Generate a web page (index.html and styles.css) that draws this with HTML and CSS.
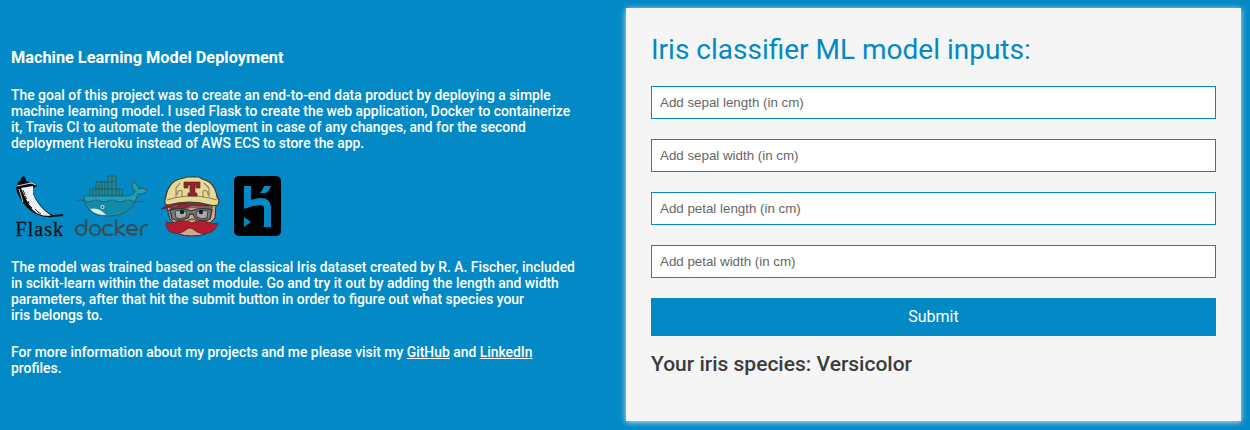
FILE: index.html
```
<!DOCTYPE html>
<html lang="en">
<head>
<meta charset="utf-8">
<title>Iris classifier</title>
<link rel="stylesheet" href="styles.css">
</head>
<body>
<main class="page">
  <section class="about">
    <h1 class="about-title">Machine Learning Model Deployment</h1>
    <p class="text">The goal of this project was to create an end-to-end data product by deploying a simple<br>machine learning model. I used Flask to create the web application, Docker to containerize<br>it, Travis CI to automate the deployment in case of any changes, and for the second<br>deployment Heroku instead of AWS ECS to store the app.</p>
    <div class="logos">
      <svg class="logo-flask" viewBox="0 0 54 60" width="54" height="60">
        <path d="M6 10 L7 6 L10 4 L10 2 L13 0 L15 3 L15 5 L18 6 L19 8 L25 8 L26 10 L22 12 L22 17 Q26 27 33 33 Q38 38 42 39 L52 38 V40 L42 41 Q29 42 20 35 Q10 27 6 16 L5 12Z" fill="#080a0c"/>
        <path d="M10 12 L22 10 L22 18 Q26 28 34 35 L40 39.500 Q29 41 22 34 Q17 29 10 12Z" fill="#eef1f2"/>
        <path d="M6 10 L20 7 L25 9 M8 13 L12 26" fill="none" stroke="#dfe5e8" stroke-width=".9"/>
        <path d="M14 20 l2 3 M17 25 l1 3 M24 33 l3 3 M17 28 l4 4 M12 14 l2 5 M27 36 l3 2" stroke="#222" stroke-width="1"/>
        <text x="4.500" y="60" class="flask-word" textLength="47.500" lengthAdjust="spacing">Flask</text>
      </svg>
      <svg class="logo-docker" viewBox="0 0 74 61" width="74" height="61">
        <path d="M15 20V13h6V6h12V0h8v13h6v7Z" fill="#188c9d" stroke="#2f5864"/>
        <path d="M21 13h20M27 6v14M33 6v14M21 13v7M33 6h8M41 13v7M18 14v6M24 8v12M30 7v13M37 1v19M44 14v6" stroke="#2f5864"/>
        <path d="M9 20H50Q59 20 60 15Q55 11 58 6Q63 8 64 13Q68 11 72 14Q70 19 63 18Q57 40 33 40Q11 41 9 20Z" fill="#16a3bd" stroke="#35606c" stroke-width="1.2"/>
        <path d="M10 25H60Q53 38 33 39Q15 38 10 25Z" fill="#128ba8"/>
        <path d="M15 33Q24 31 31 39Q20 39 15 33Z" fill="#dce8e7"/>
        <path d="M2 25q4-2 7 0q4 2 8 0q4-2 8 0q4 2 8 0q4-2 8 0q4 2 8 0q4-2 8 0q4 2 12 0" fill="none" stroke="#35606c" stroke-width="1.200"/>
        <circle cx="27.500" cy="31" r="2" fill="#d5e1e1"/><circle cx="27.500" cy="31" r="1" fill="#27464e"/>
        <g class="docker-word"><circle cx="6" cy="54" r="5"/><path d="M11 44v10"/><circle cx="20" cy="54" r="5"/><path d="M37 49.500q-9-2-9 4.500q0 6.500 9 4.500M41 44v15M49 49l-8 5 8 5M52 54h10q-1-5-5-5-5 0-5 5 1 6 9 4M66 59v-5q0-5 6-5"/></g>
      </svg>
      <svg class="logo-travis" viewBox="0 0 58 60" width="58" height="60">
        <path d="M8 27 L4 32 L7 43 L12 48 L15 58 Q28 62 43 58 L47 47 L52 42 L53 29Z" fill="#d4a78b" stroke="#342b2b"/>
        <path d="M6 27 L52 26 L49 34 L31 32 L10 34Z" fill="#71695f"/>
        <path d="M-2 33 Q10 24 25 27 L12 29 L5 35 L17 29 L37 26 L46 30 L29 29 L7 38 L9 31Z" fill="#a12430" stroke="#602029" stroke-width=".8"/>
        <path d="M3 20Q6 4 21 2l3-1h12l3 2q13 3 15 18l2 3-1 5q-5 1-8 0-20-6-42 0-4 0-3-5Z" fill="#e9d996" stroke="#3d3932" stroke-width="1.200"/>
        <path d="M4 24q24-8 50 0M13 21V12l4-5M46 21V12l-5-5M19 21v-6q-5-2-5 4M40 21v-6q5-2 5 4" fill="none" stroke="#8e825d" stroke-width="1.100"/>
        <path d="M22 6h15v6h-4v-3h-1v8h2v3h-9v-3h2V9h-2v3h-4V6Z" fill="#99202c" stroke="#493331" stroke-width=".7"/>
        <path d="M7 34q12-3 21 1 10-4 21-1l-2 9q-9 4-15-1l-2-4h-3l-2 4q-8 4-16 1Z" fill="#77797a" stroke="#35383b" stroke-width="1.300"/>
        <path d="M12 35q7-2 12 1l-1 5q-6 3-10 1ZM33 36q6-3 12-1l-1 7q-6 2-10-1Z" fill="#acaba3" stroke="#3a3d40"/>
        <circle cx="19" cy="36" r="2.200" fill="#171d20"/><circle cx="38" cy="36" r="2.200" fill="#171d20"/>
        <path d="M24 45q5-4 10 0" fill="#c3967e" stroke="#513b36"/>
        <path d="M3 46q5 2 9 0 10-3 17 1 8-4 16-1 5 3 10 1-3 9-10 10-9 2-15-4-4-2-6 0-7 6-13 4-8-1-8-11Z" fill="#b41d2d" stroke="#62222b" stroke-width=".8"/>
      </svg>
      <svg class="logo-heroku" viewBox="0 0 47 60" width="47" height="60">
        <rect width="47" height="60" rx="5"/>
        <path d="M10 10h7v14Q36 18 37 31v20h-7V32q0-6-20 1ZM30 10h7q-1 4-5 7h-6q3-3 4-7ZM10 41l7 5-7 5Z" fill="#0389c5"/>
      </svg>
    </div>
    <p class="text">The model was trained based on the classical Iris dataset created by R. A. Fischer, included<br>in scikit-learn within the dataset module. Go and try it out by adding the length and width<br>parameters, after that hit the submit button in order to figure out what species your<br>iris belongs to.</p>
    <p class="text contact">For more information about my projects and me please visit my <a href="#">GitHub</a> and <a href="#">LinkedIn</a><br>profiles.</p>
  </section>
  <form class="card">
    <h2 class="card-title">Iris classifier ML model inputs:</h2>
    <input class="field" placeholder="Add sepal length (in cm)">
    <input class="field" placeholder="Add sepal width (in cm)">
    <input class="field" placeholder="Add petal length (in cm)">
    <input class="field" placeholder="Add petal width (in cm)">
    <button class="submit" type="button">Submit</button>
    <p class="result">Your iris species: Versicolor</p>
  </form>
</main>
</body>
</html>
```
FILE: styles.css
```
* { box-sizing: border-box; }
body {
  margin: 0;
  background: #0389c5;
  color: #fff;
  font-family: Roboto, sans-serif;
  overflow: hidden;
}
.page {
  display: grid;
  grid-template-columns: 615px 615px;
  height: 430px;
  padding: 8px 0 9px 11px;
}
.about { padding-top: 40px; }
.about-title {
  margin: 0 0 19px;
  font-size: 16.3px;
  font-weight: 700;
  line-height: 20px;
}
.text {
  margin: 0;
  font-size: 13.9px;
  font-weight: 500;
  line-height: 16px;
  white-space: nowrap;
}
.text a { color: inherit; }
.contact { margin-top: 21px; }
.logos {
  display: flex;
  height: 60px;
  margin: 25px 0 23px;
}
.logos svg { overflow: visible; flex: none; }
.logo-docker { margin-left: 10px; }
.logo-travis { margin-left: 14px; }
.logo-heroku { margin-left: 13px; }
.flask-word { font: 20px "Liberation Serif", serif; fill: #111; stroke: #111; stroke-width: .3; }
.docker-word { fill: none; stroke: #394d54; stroke-width: 2.2; stroke-linecap: round; }
.card {
  display: flex;
  flex-direction: column;
  padding: 25px 25px 24px;
  background: #f5f5f5;
  box-shadow: 0 1px 6px rgba(255, 255, 255, .8);
}
.card-title {
  margin: 0 0 19px;
  color: #0389c5;
  font-size: 28px;
  font-weight: 400;
  line-height: 34px;
}
.field {
  height: 33px;
  margin: 0 0 20px;
  padding: 0 8px;
  border: 1px solid #0389c5;
  border-radius: 0;
  background: #fff;
  font: 13.333px "Liberation Sans", Arial, sans-serif;
}
.field::placeholder { color: #666; }
.submit {
  height: 38px;
  padding: 0 0 2px;
  border: 0;
  background: #0389c5;
  color: #fff;
  font: 16px Roboto, sans-serif;
}
.result {
  margin: 16px 0 0;
  color: #3c3c3c;
  font-size: 21px;
  font-weight: 500;
  line-height: 24px;
}
```
